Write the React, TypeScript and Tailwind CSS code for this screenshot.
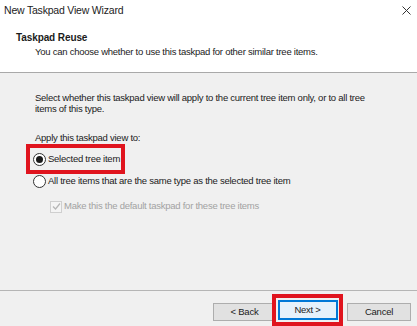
import React from "react";

function Radio({ checked }: { checked?: boolean }) {
  return (
    <span className="flex h-[13px] w-[13px] shrink-0 items-center justify-center rounded-full border border-[#333333] bg-white">
      {checked && <span className="h-[7px] w-[7px] rounded-full bg-[#1a1a1a]" />}
    </span>
  );
}

export default function App() {
  return (
    <div
      className="flex h-[326px] w-[417px] flex-col overflow-hidden bg-[#f0f0f0] text-[9.5px] tracking-[-0.25px] text-[#1b1b1b]"
      style={{ fontFamily: '"Liberation Sans", Arial, sans-serif' }}
    >
      {/* title bar + header */}
      <div className="flex h-[73px] flex-col border-b border-[#a9a9a9] bg-white">
        <div className="flex h-[21px] items-center justify-between pl-[4px] pr-[6px]">
          <span className="text-[10.5px] tracking-[-0.2px] text-[#222]">New Taskpad View Wizard</span>
          <svg width="9" height="9" viewBox="0 0 9 9" className="text-[#333]">
            <path d="M0.5 0.5 L8.5 8.5 M8.5 0.5 L0.5 8.5" stroke="currentColor" strokeWidth="1" />
          </svg>
        </div>
        <div className="pl-[16px] pt-[10px] text-[10px] font-bold leading-[13px] tracking-[-0.1px]">
          Taskpad Reuse
        </div>
        <div className="pl-[35px] pt-[1px] leading-[13px]">
          You can choose whether to use this taskpad for other similar tree items.
        </div>
      </div>

      {/* body */}
      <div className="flex flex-1 flex-col pl-[35px] pr-[28px] pt-[19px]">
        <p className="leading-[11px]">
          Select whether this taskpad view will apply to the current tree item only, or to all tree
          <br />
          items of this type.
        </p>
        <p className="mt-[18px] leading-[11px]">Apply this taskpad view to:</p>

        <div className="relative -ml-[2px] mt-[7px] flex h-[18px] items-center gap-[2px]">
          <span className="pointer-events-none absolute left-[-7px] top-[-6px] h-[30px] w-[99px] border-[4px] border-[#e0141e]" />
          <Radio checked />
          <span>Selected tree item</span>
        </div>

        <div className="-ml-[2px] mt-[7px] flex h-[13px] items-center gap-[2px]">
          <Radio />
          <span>All tree items that are the same type as the selected tree item</span>
        </div>

        <div className="mt-[12px] flex h-[13px] items-center gap-[2px] pl-[15px] text-[#a2a2a2]">
          <span className="flex h-[12px] w-[12px] items-center justify-center border border-[#cfcfcf] bg-[#f4f4f4]">
            <svg width="9" height="9" viewBox="0 0 9 9">
              <path d="M1 4.5 L3.5 7 L8 1.5" fill="none" stroke="#b5b5b5" strokeWidth="1.2" />
            </svg>
          </span>
          <span>Make this the default taskpad for these tree items</span>
        </div>
      </div>

      {/* footer */}
      <div className="flex h-[36px] items-start justify-end border-t border-[#b5b5b5] pr-[6px] pt-[3px]">
        <button className="mt-[9px] h-[18px] w-[63px] border border-[#adadad] bg-[#e1e1e1] text-[9.5px]">
          &lt; Back
        </button>
        <div className="-ml-[4px] flex h-[32px] w-[71px] items-center justify-center border-[4px] border-[#e0141e]">
          <button className="h-[20px] w-[60px] border border-[#0078d7] bg-[#e5f1fb] text-[9.5px] shadow-[inset_0_0_0_1px_#0078d7]">
            Next &gt;
          </button>
        </div>
        <button className="ml-[4px] mt-[9px] h-[18px] w-[64px] border border-[#adadad] bg-[#e1e1e1] text-[9.5px]">
          Cancel
        </button>
      </div>
    </div>
  );
}
